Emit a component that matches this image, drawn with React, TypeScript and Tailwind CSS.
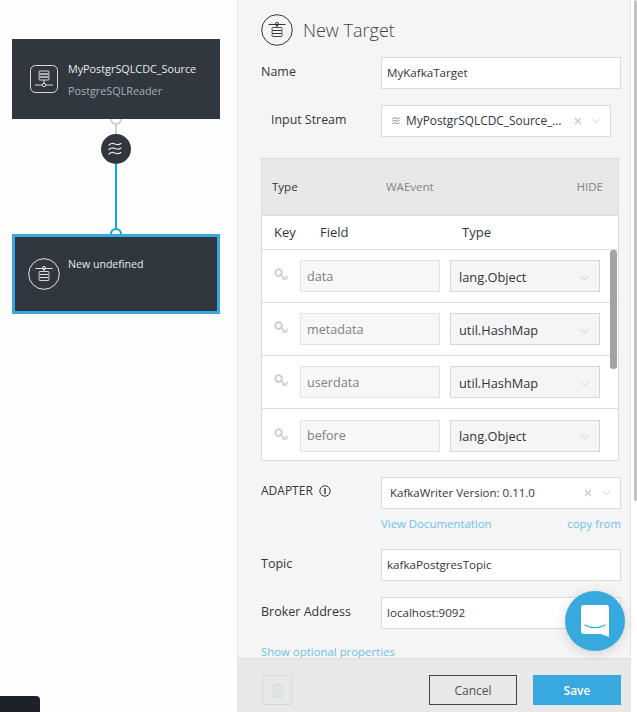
import React from "react";

const font = { fontFamily: '"Open Sans", "Noto Sans", sans-serif' };

function TargetGlyph({ className = "" }: { className?: string }) {
  return (
    <svg viewBox="0 0 32 32" className={className} fill="none" stroke="currentColor">
      <circle cx="16" cy="16" r="15.3" strokeWidth="1" />
      <path d="M7.5 10.5h17M16 11v2.5" strokeWidth="1" />
      <circle cx="16" cy="10" r="1.6" strokeWidth="1" fill="none" />
      <rect x="11" y="13.5" width="10" height="3" rx="0.8" strokeWidth="0.9" />
      <rect x="11" y="16.5" width="10" height="3" rx="0.8" strokeWidth="0.9" />
      <rect x="11" y="19.5" width="10" height="3" rx="0.8" strokeWidth="0.9" />
    </svg>
  );
}

function SourceGlyph() {
  return (
    <svg viewBox="0 0 28 28" className="w-[28px] h-[28px] text-[#d5dadd]" fill="none" stroke="currentColor" strokeWidth="1">
      <rect x="0.5" y="0.5" width="27" height="27" rx="5" />
      <rect x="9" y="6" width="10" height="3" rx="0.7" />
      <rect x="9" y="9" width="10" height="3" rx="0.7" />
      <rect x="9" y="12" width="10" height="3" rx="0.7" />
      <path d="M14 15v4M5 20h7M16 20h7" />
      <circle cx="14" cy="20" r="1.7" />
    </svg>
  );
}

function Waves({ className = "" }: { className?: string }) {
  return (
    <svg viewBox="0 0 16 14" className={className} fill="none" stroke="currentColor" strokeWidth="1.2" strokeLinecap="round">
      <path d="M1 3c2-2 4-2 6-1s4 1 6-.5" />
      <path d="M1 7.5c2-2 4-2 6-1s4 1 6-.5" />
      <path d="M1 12c2-2 4-2 6-1s4 1 6-.5" />
    </svg>
  );
}

function Chevron() {
  return (
    <svg viewBox="0 0 10 6" className="w-[9px] h-[6px] text-[#c3c8cb]" fill="none" stroke="currentColor" strokeWidth="1">
      <path d="M1 1l4 4 4-4" />
    </svg>
  );
}

function Cross() {
  return (
    <svg viewBox="0 0 8 8" className="w-[8px] h-[8px] text-[#c3c8cb]" fill="none" stroke="currentColor" strokeWidth="1.2">
      <path d="M1 1l6 6M7 1L1 7" />
    </svg>
  );
}

function KeyIcon() {
  return (
    <svg viewBox="0 0 14 14" className="w-[14px] h-[14px] text-[#cfcfcf]" fill="none" stroke="currentColor">
      <circle cx="4.6" cy="4.6" r="3.3" strokeWidth="2" />
      <path d="M6.8 6.8l6 5M10.5 9.5l-1.8 2.2M12.3 7.8l1.5 2" strokeWidth="1.7" />
    </svg>
  );
}

function Row({ field, type, last }: { field: string; type: string; last?: boolean }) {
  return (
    <div className={`h-[53px] flex items-center pl-[12px] ${last ? "" : "border-b border-[#dcdcdc]"}`}>
      <div className="w-[26px] -mt-[2px]">
        <KeyIcon />
      </div>
      <div className="w-[140px] h-[32px] border border-[#e2e2e2] bg-[#f7f7f7] flex items-center pl-[6px] pt-[2px] text-[12.6px] text-[#7b8287] leading-none">
        {field}
      </div>
      <div className="w-[150px] h-[32px] ml-[10px] border border-[#d6d6d6] bg-[#f5f5f5] flex items-center justify-between pl-[8px] pr-[10px] pt-[3px] text-[12.8px] text-[#30373d]">
        <span>{type}</span>
        <Chevron />
      </div>
    </div>
  );
}

function Field({ label, value }: { label: string; value: string }) {
  return (
    <div className="flex items-start">
      <div className="w-[120px] text-[12.5px] text-[#30373d] leading-[30px]">{label}</div>
      <div className="w-[240px] h-[32px] border border-[#dcdcdc] bg-white flex items-center pl-[5px] text-[11.6px] text-[#30373d]">
        {value}
      </div>
    </div>
  );
}

export default function App() {
  return (
    <div className="relative w-[637px] h-[712px] overflow-hidden flex bg-[#fdfdfd]" style={font}>
      <div className="relative w-[238px] shrink-0 bg-[#fdfdfd] border-r border-[#e6e6e6]">
        <div className="absolute left-[12px] top-[39px] w-[208px] h-[80px] bg-[#30373e] flex items-center pl-[18px]">
          <SourceGlyph />
          <div className="ml-[10px] mt-[1px]">
            <div className="text-[10.8px] text-[#e8ebec] leading-[14px]">MyPostgrSQLCDC_Source</div>
            <div className="text-[10.8px] text-[#9fb3ba] leading-[14px] mt-[8px]">PostgreSQLReader</div>
          </div>
        </div>
        <div className="absolute left-[110px] top-[119px] w-[12px] h-[6px] border-2 border-t-0 border-[#c8d2d8] rounded-b-[6px]" />
        <div className="absolute left-[115px] top-[125px] w-[2px] h-[10px] bg-[#c8d2d8]" />
        <div className="absolute left-[101px] top-[134px] w-[30px] h-[30px] rounded-full bg-[#30373e] flex items-center justify-center text-[#e2e6e8]">
          <Waves className="w-[16px] h-[14px]" />
        </div>
        <div className="absolute left-[115px] top-[164px] w-[2px] h-[65px] bg-[#0ea5d8]" />
        <div className="absolute left-[110px] top-[228px] w-[12px] h-[7px] border-2 border-b-0 border-[#0ea5d8] rounded-t-[6px]" />
        <div className="absolute left-[12px] top-[234px] w-[208px] h-[80px] bg-[#30373e] border-[3px] border-[#38a9df] flex pl-[13px]">
          <TargetGlyph className="w-[32px] h-[32px] text-[#e2e6e8] mt-[21px]" />
          <div className="ml-[8px] mt-[20px] text-[10.6px] text-[#e8ebec] leading-[14px]">New undefined</div>
        </div>
        <div className="absolute left-0 top-[696px] w-[40px] h-[16px] bg-[#1d2228] rounded-tr-[4px]" />
      </div>

      <div className="relative w-[393px] shrink-0 bg-[#f5f5f5] flex flex-col border-r border-[#e4e4e4]">
        <div className="flex-1 overflow-hidden pl-[23px] pr-[9px] pt-[14px]">
          <div className="flex items-center h-[32px]">
            <TargetGlyph className="w-[32px] h-[32px] text-[#30373e]" />
            <span className="ml-[10px] text-[18px] text-[#3c444a] font-light leading-[28px]">New Target</span>
          </div>
          <div className="mt-[11px]">
            <Field label="Name" value="MyKafkaTarget" />
          </div>
          <div className="mt-[16px] flex items-start">
            <div className="w-[120px] pl-[10px] text-[12.4px] text-[#30373d] leading-[30px]">Input Stream</div>
            <div className="w-[230px] h-[32px] border border-[#dcdcdc] bg-white flex items-center pl-[10px] pr-[10px] text-[11.9px] text-[#30373d]">
              <Waves className="w-[9px] h-[8px] text-[#555] shrink-0" />
              <span className="ml-[5px] flex-1 whitespace-nowrap overflow-hidden">MyPostgrSQLCDC_Source_…</span>
              <Cross />
              <span className="ml-[9px]"><Chevron /></span>
            </div>
          </div>

          <div className="mt-[21px] w-[358px] h-[303px] border border-[#dcdcdc] bg-white">
            <div className="h-[57px] bg-[#e8e8e8] border-b-2 border-[#dedede] flex items-center pl-[10px] pr-[15px] text-[11.5px]">
              <span className="w-[114px] text-[#30373d]">Type</span>
              <span className="flex-1 text-[#7d858a]">WAEvent</span>
              <span className="text-[#7d858a]">HIDE</span>
            </div>
            <div className="h-[34px] flex items-center border-b border-[#dcdcdc] text-[13px] text-[#30373d] pl-[12px]">
              <span className="w-[46px]">Key</span>
              <span className="w-[142px]">Field</span>
              <span>Type</span>
            </div>
            <div className="relative h-[212px] overflow-hidden">
              <Row field="data" type="lang.Object" />
              <Row field="metadata" type="util.HashMap" />
              <Row field="userdata" type="util.HashMap" />
              <Row field="before" type="lang.Object" last />
              <div className="absolute right-[1px] top-0 w-[7px] h-[119px] bg-[#a3a3a3] rounded-[3px]" />
            </div>
          </div>

          <div className="mt-[16px] flex items-start">
            <div className="w-[120px] text-[12px] text-[#30373d] leading-[28px] flex items-center">
              ADAPTER
              <svg viewBox="0 0 12 12" className="ml-[6px] w-[12px] h-[12px] text-[#30373d]" fill="none" stroke="currentColor">
                <circle cx="6" cy="6" r="5.2" />
                <path d="M6 3v6" strokeWidth="1.4" />
              </svg>
            </div>
            <div className="w-[240px] h-[32px] border border-[#dcdcdc] bg-white flex items-center pl-[8px] pr-[9px] text-[11.5px] text-[#30373d]">
              <span className="flex-1">KafkaWriter Version: 0.11.0</span>
              <Cross />
              <span className="ml-[10px]"><Chevron /></span>
            </div>
          </div>
          <div className="ml-[120px] w-[240px] flex justify-between text-[11.4px] text-[#6ec0e8] mt-[7px] leading-[16px]">
            <span>View Documentation</span>
            <span>copy from</span>
          </div>
          <div className="mt-[17px]">
            <Field label="Topic" value="kafkaPostgresTopic" />
          </div>
          <div className="mt-[16px]">
            <Field label="Broker Address" value="localhost:9092" />
          </div>
          <div className="mt-[15px] text-[11.4px] text-[#6ec0e8] leading-[16px]">Show optional properties</div>
        </div>
        <div className="h-[54px] shrink-0 bg-[#e8e8e8] border-t border-[#dcdcdc] flex items-start pt-[16px] pl-[24px] pr-[9px]">
          <div className="w-[30px] h-[30px] border border-[#cfdce3] flex items-center justify-center text-[#cfdce3]">
            <svg viewBox="0 0 16 16" className="w-[15px] h-[15px]" fill="none" stroke="currentColor" strokeWidth="1.2">
              <path d="M1 3.5h14M5.5 3.5V1.5h5v2M3 3.5l1 11.5h8l1-11.5M6.5 6v7M9.5 6v7" />
            </svg>
          </div>
          <div className="ml-auto w-[88px] h-[30px] border border-[#3b444a] flex items-center justify-center pt-[1px] text-[12px] text-[#4a5257]">Cancel</div>
          <div className="ml-[16px] w-[88px] h-[30px] bg-[#38a9df] flex items-center justify-center pt-[1px] text-[12px] font-semibold text-white">Save</div>
        </div>
      </div>

      <div className="relative flex-1 bg-white">
        <div className="absolute right-0 top-0 w-[3px] h-[501px] bg-[#c2c2c2] rounded-[2px]" />
      </div>

      <div className="absolute left-[565px] top-[591px] w-[60px] h-[60px] rounded-full bg-[#38a9df] shadow-[0_2px_12px_rgba(0,0,0,0.15)] flex items-center justify-center">
        <svg viewBox="0 0 28 32" className="w-[28px] h-[32px]">
          <path d="M3 0h22a3 3 0 0 1 3 3v29l-8-3H3a3 3 0 0 1-3-3V3a3 3 0 0 1 3-3z" fill="#fff" />
          <path d="M4 20c6 3.5 14 3.5 20 0" fill="none" stroke="#38a9df" strokeWidth="1.4" strokeLinecap="round" />
        </svg>
      </div>
    </div>
  );
}
